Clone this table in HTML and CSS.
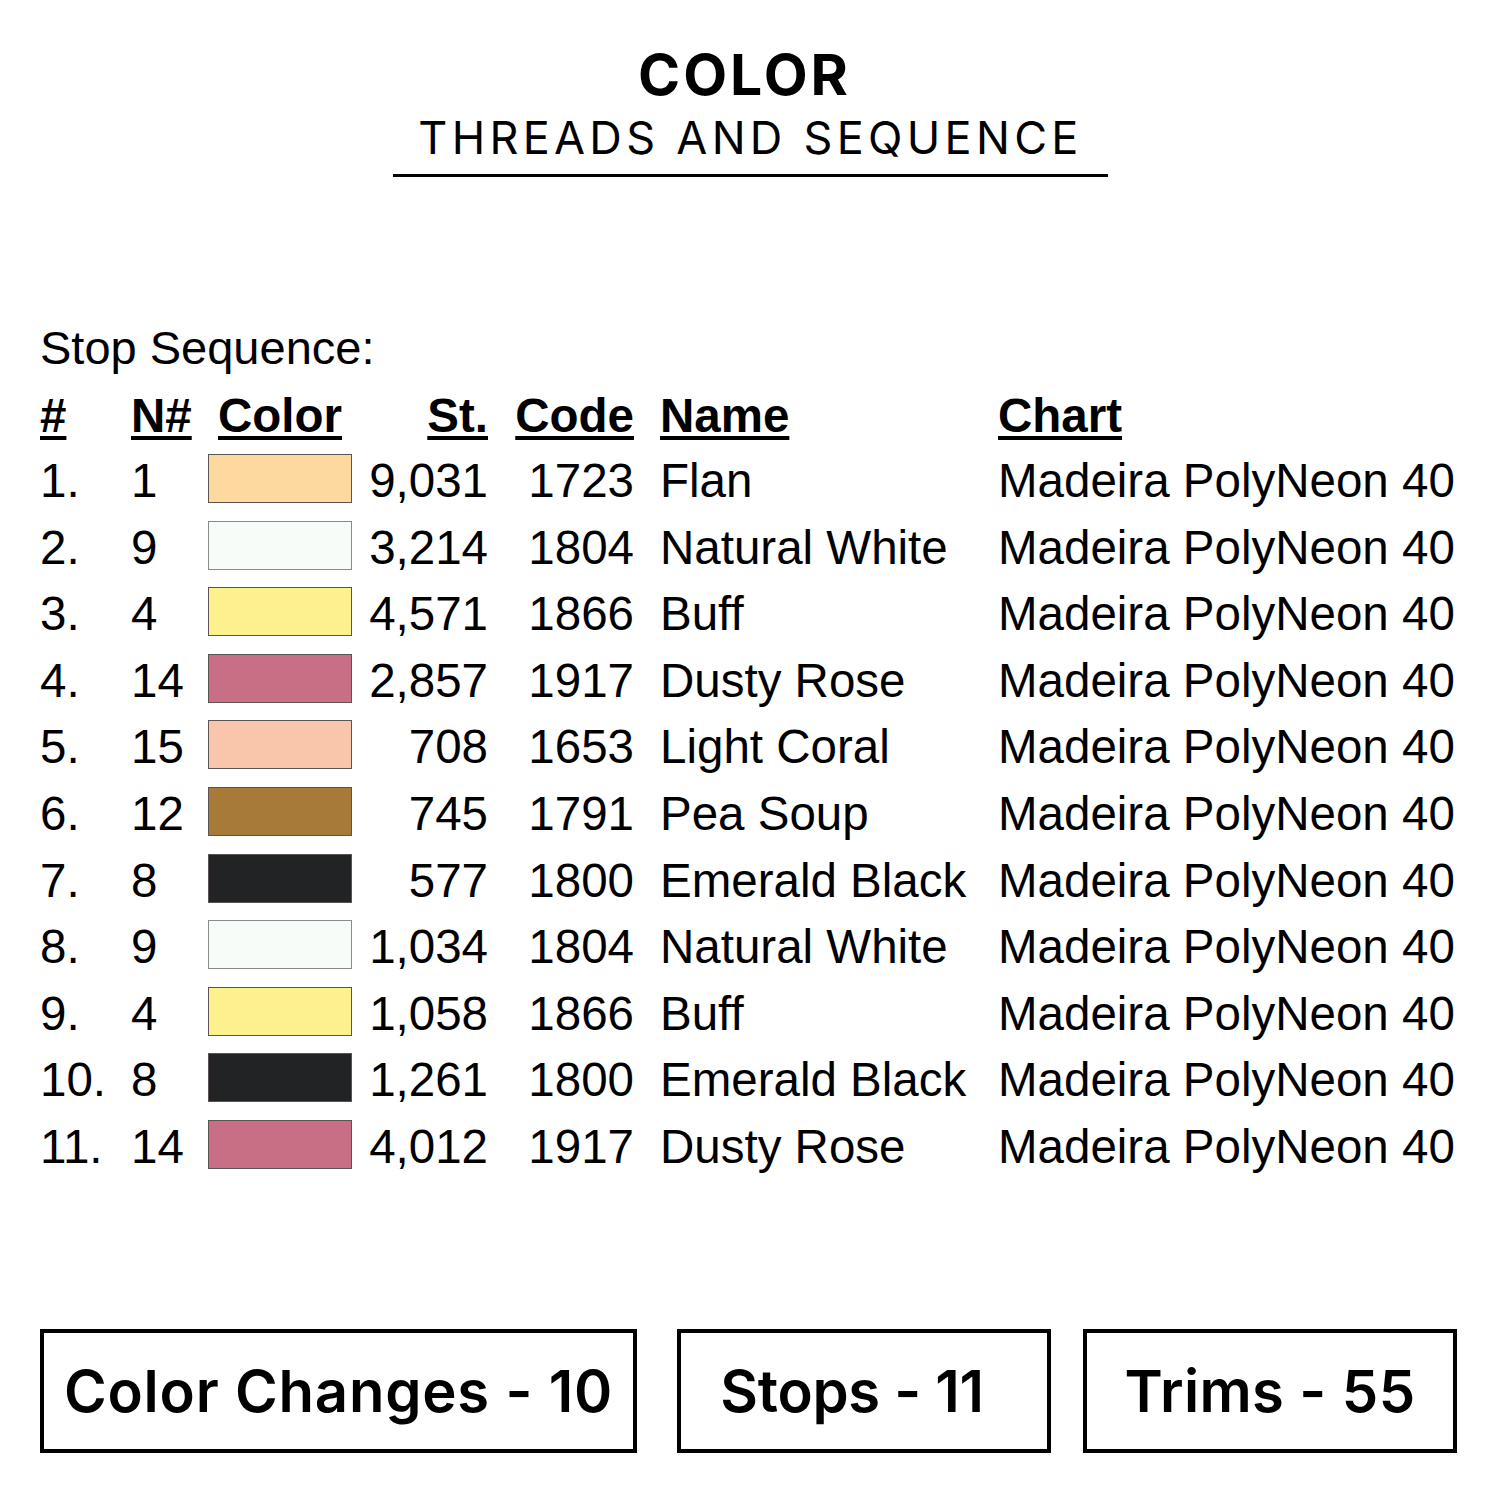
FILE: index.html
```html
<!DOCTYPE html>
<html>
<head>
<meta charset="utf-8">
<link rel="stylesheet" href="styles.css">
</head>
<body>
<div class="page">
  <header class="title">
    <h1 class="title-main">COLOR</h1>
    <div class="title-sub">THREADS AND SEQUENCE</div>
  </header>

  <section class="seq">
    <div class="seq-label">Stop Sequence:</div>
    <div class="grid">
      <div class="hd c1"><u>#</u></div>
      <div class="hd c2"><u>N#</u></div>
      <div class="hd c3"><u>Color</u></div>
      <div class="hd c4"><u>St.</u></div>
      <div class="hd c5"><u>Code</u></div>
      <div class="hd c6"><u>Name</u></div>
      <div class="hd c7"><u>Chart</u></div>

      <div class="c1">1.</div><div class="c2">1</div><div class="c3"><span class="sw flan"></span></div><div class="c4">9,031</div><div class="c5">1723</div><div class="c6">Flan</div><div class="c7">Madeira PolyNeon 40</div>
      <div class="c1">2.</div><div class="c2">9</div><div class="c3"><span class="sw white"></span></div><div class="c4">3,214</div><div class="c5">1804</div><div class="c6">Natural White</div><div class="c7">Madeira PolyNeon 40</div>
      <div class="c1">3.</div><div class="c2">4</div><div class="c3"><span class="sw buff"></span></div><div class="c4">4,571</div><div class="c5">1866</div><div class="c6">Buff</div><div class="c7">Madeira PolyNeon 40</div>
      <div class="c1">4.</div><div class="c2">14</div><div class="c3"><span class="sw rose"></span></div><div class="c4">2,857</div><div class="c5">1917</div><div class="c6">Dusty Rose</div><div class="c7">Madeira PolyNeon 40</div>
      <div class="c1">5.</div><div class="c2">15</div><div class="c3"><span class="sw coral"></span></div><div class="c4">708</div><div class="c5">1653</div><div class="c6">Light Coral</div><div class="c7">Madeira PolyNeon 40</div>
      <div class="c1">6.</div><div class="c2">12</div><div class="c3"><span class="sw pea"></span></div><div class="c4">745</div><div class="c5">1791</div><div class="c6">Pea Soup</div><div class="c7">Madeira PolyNeon 40</div>
      <div class="c1">7.</div><div class="c2">8</div><div class="c3"><span class="sw black"></span></div><div class="c4">577</div><div class="c5">1800</div><div class="c6">Emerald Black</div><div class="c7">Madeira PolyNeon 40</div>
      <div class="c1">8.</div><div class="c2">9</div><div class="c3"><span class="sw white"></span></div><div class="c4">1,034</div><div class="c5">1804</div><div class="c6">Natural White</div><div class="c7">Madeira PolyNeon 40</div>
      <div class="c1">9.</div><div class="c2">4</div><div class="c3"><span class="sw buff"></span></div><div class="c4">1,058</div><div class="c5">1866</div><div class="c6">Buff</div><div class="c7">Madeira PolyNeon 40</div>
      <div class="c1">10.</div><div class="c2">8</div><div class="c3"><span class="sw black"></span></div><div class="c4">1,261</div><div class="c5">1800</div><div class="c6">Emerald Black</div><div class="c7">Madeira PolyNeon 40</div>
      <div class="c1">11.</div><div class="c2">14</div><div class="c3"><span class="sw rose"></span></div><div class="c4">4,012</div><div class="c5">1917</div><div class="c6">Dusty Rose</div><div class="c7">Madeira PolyNeon 40</div>
    </div>
  </section>

  <footer class="stats">
    <div class="box box-wide">Color Changes - 10</div>
    <div class="box box-mid">Stops - 11</div>
    <div class="box box-right">Trims - 55</div>
  </footer>
</div>
</body>
</html>
```

FILE: styles.css
```css
* { box-sizing: border-box; }
html, body { margin: 0; padding: 0; background: #fff; }
body { width: 1500px; height: 1500px; color: #000; }
.page { width: 1500px; height: 1500px; position: relative; overflow: hidden; }

.title {
  width: 715px;
  margin: 0 0 0 393px;
  padding-top: 40px;
  border-bottom: 3px solid #000;
  text-align: center;
  font-family: "Inter", "Open Sans", sans-serif;
}
.title-main {
  margin: 0 0 0 -12px;
  font-size: 57px;
  line-height: 70px;
  font-weight: 700;
  letter-spacing: 3px;
}
.title-sub {
  font-size: 45px;
  line-height: 56px;
  font-weight: 400;
  letter-spacing: 4.3px;
  padding-bottom: 8px;
}

.seq {
  font-family: "Liberation Sans", Arial, sans-serif;
  font-size: 47.5px;
  margin-top: 144px;
  padding-left: 40px;
}
.seq-label {
  font-size: 47px;
  line-height: 54px;
  height: 54px;
}
.grid {
  display: grid;
  grid-template-columns: 91px 77px 144px 136px 146px 364px auto;
  grid-template-rows: 63px;
  grid-auto-rows: 66.6px;
  line-height: 66.6px;
  white-space: nowrap;
  margin-top: 10px;
}
.hd { font-weight: 700; line-height: 62px; }
.hd u {
  text-decoration-thickness: 4px;
  text-underline-offset: 4px;
}
.c3 { display: flex; align-items: flex-start; }
.hd.c3 { padding-left: 10px; }
.c4, .c5 { text-align: right; }
.c6 { padding-left: 26px; }

.sw {
  display: block;
  width: 144px;
  height: 49px;
  margin-top: 6px;
  border: 1.5px solid #5a5552;
}
.flan { background: #fdd9a0; }
.white { background: #f8fcf8; border-color: #8a8a88; }
.buff { background: #fdf08f; }
.rose { background: #c86f83; }
.coral { background: #f9c5ab; }
.pea { background: #a87a38; }
.black { background: #222325; }

.stats {
  position: absolute;
  left: 40px;
  top: 1329px;
  display: flex;
  font-family: "Inter", "Open Sans", sans-serif;
  font-weight: 600;
  font-size: 58px;
}
.box {
  height: 124px;
  border: 4px solid #000;
  display: flex;
  align-items: center;
  justify-content: center;
  white-space: nowrap;
}
.box-wide { width: 597px; letter-spacing: 0.8px; }
.box-mid { width: 374px; margin-left: 40px; padding-right: 24px; letter-spacing: -0.3px; }
.box-right { width: 374px; margin-left: 32px; letter-spacing: 0.4px; }
```
